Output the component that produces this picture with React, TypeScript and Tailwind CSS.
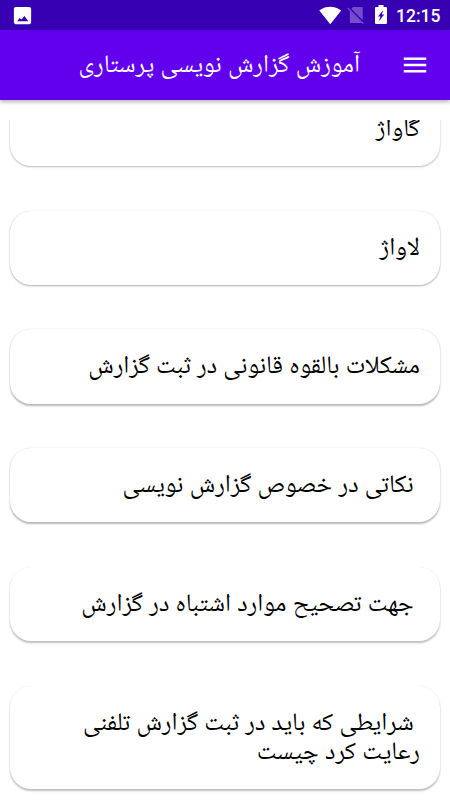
const items = [
  { title: 'گاواژ', shadow: 'shadow-[0_1px_2px_rgba(0,0,0,0.25),0_0_1px_rgba(0,0,0,0.18)]' },
  { title: 'لاواژ', shadow: 'shadow-[0_1px_2px_rgba(0,0,0,0.3),0_0_1px_rgba(0,0,0,0.15)]' },
  { title: 'مشکلات بالقوه قانونی در ثبت گزارش', shadow: 'shadow-[0_1.5px_2px_rgba(0,0,0,0.28),0_0_1px_rgba(0,0,0,0.14)]' },
  { title: ' نکاتی در خصوص گزارش نویسی', shadow: 'shadow-[0_1.5px_2px_rgba(0,0,0,0.28),0_0_1px_rgba(0,0,0,0.12)]' },
  { title: ' جهت تصحیح موارد اشتباه در گزارش', shadow: 'shadow-[0_2px_2px_rgba(0,0,0,0.25),0_0_1px_rgba(0,0,0,0.12)]' },
  { title: ' شرایطی که باید در ثبت گزارش تلفنی رعایت کرد چیست', shadow: 'shadow-[0_2px_2px_rgba(0,0,0,0.25),0_0_1px_rgba(0,0,0,0.12)]' },
];

function StatusBar() {
  return (
    <div dir="ltr" className="flex h-[30px] items-center bg-[#3700b3] pl-[11px] pr-[9px] text-white">
      <svg viewBox="0 0 24 24" className="size-[23px]" fill="currentColor">
        <path d="M21 19V5c0-1.1-.9-2-2-2H5c-1.100 0-2 .9-2 2v14c0 1.100.9 2 2 2h14c1.100 0 2-.9 2-2zM6.500 18l2.500-3.500 2 1.800L14 12.500l4 5.500z" />
      </svg>
      <svg viewBox="0 0 24 24" className="ml-auto size-[22.5px]" fill="currentColor">
        <path d="M12.010 21.490L23.640 7c-.45-.34-4.930-4-11.640-4C5.280 3 .81 6.660.36 7l11.630 14.490.01.01.01-.01z" />
      </svg>
      <svg viewBox="0 0 18 18" className="ml-[6px] h-[18px] w-[18px] opacity-30" fill="currentColor">
        <path d="M6 1h8.500c.8 0 1.200.4 1.200 1.200v12L4.400 2.700z" />
        <path d="M2.800 4.800L14.600 16.700c-.2.2-.4.3-.7.3H4c-.8 0-1.200-.4-1.200-1.200z" />
        <path d="M1.200 1.600l15.600 15.600-.9.800L.3 2.500z" />
      </svg>
      <svg viewBox="0 0 12 19" className="mb-px ml-[10px] h-[19px] w-3" fill="currentColor" fillRule="evenodd">
        <path d="M3.500 0h5v2H11q1 0 1 1v15q0 1-1 1H1q-1 0-1-1V3q0-1 1-1h2.500zM8.300 5L3 11.500L5.500 11.500L3.800 16.500L9.200 9.500L6.800 9.500z" />
      </svg>
      <span className="ml-[9px] w-[45px] pt-0.5 font-[Roboto,sans-serif] text-[17.5px] font-medium leading-[28px]">12:15</span>
    </div>
  );
}

export default function App() {
  return (
    <div
      dir="rtl"
      className="flex h-[800px] w-[450px] flex-col overflow-hidden bg-white font-[Roboto,'Noto_Naskh_Arabic_UI','Noto_Naskh_Arabic',sans-serif]"
    >
      <StatusBar />
      <header className="flex h-[70px] shrink-0 items-center bg-[#6200ee] pr-5 text-white shadow-[0_2px_4px_rgba(0,0,0,0.3)]">
        <svg viewBox="0 0 24 24" className="size-[30px]" fill="currentColor">
          <path d="M3 18h18v-2H3v2zm0-5h18v-2H3v2zm0-7v2h18V6H3z" />
        </svg>
        <h1 className="mr-10 pt-1 text-[25.1px] leading-[30px]">آموزش گزارش نویسی پرستاری</h1>
      </header>
      <main className="mt-5 flex-1 overflow-hidden">
        <div className="-mt-7 flex flex-col gap-[44.5px] px-2.5">
          {items.map(({ title, shadow }) => (
            <div
              key={title}
              className={`shrink-0 rounded-[21px] bg-white px-5 pt-6 pb-[20.8px] text-[25.1px] leading-[29.4px] whitespace-pre-wrap text-black ${shadow}`}
            >
              {title}
            </div>
          ))}
        </div>
      </main>
    </div>
  );
}
